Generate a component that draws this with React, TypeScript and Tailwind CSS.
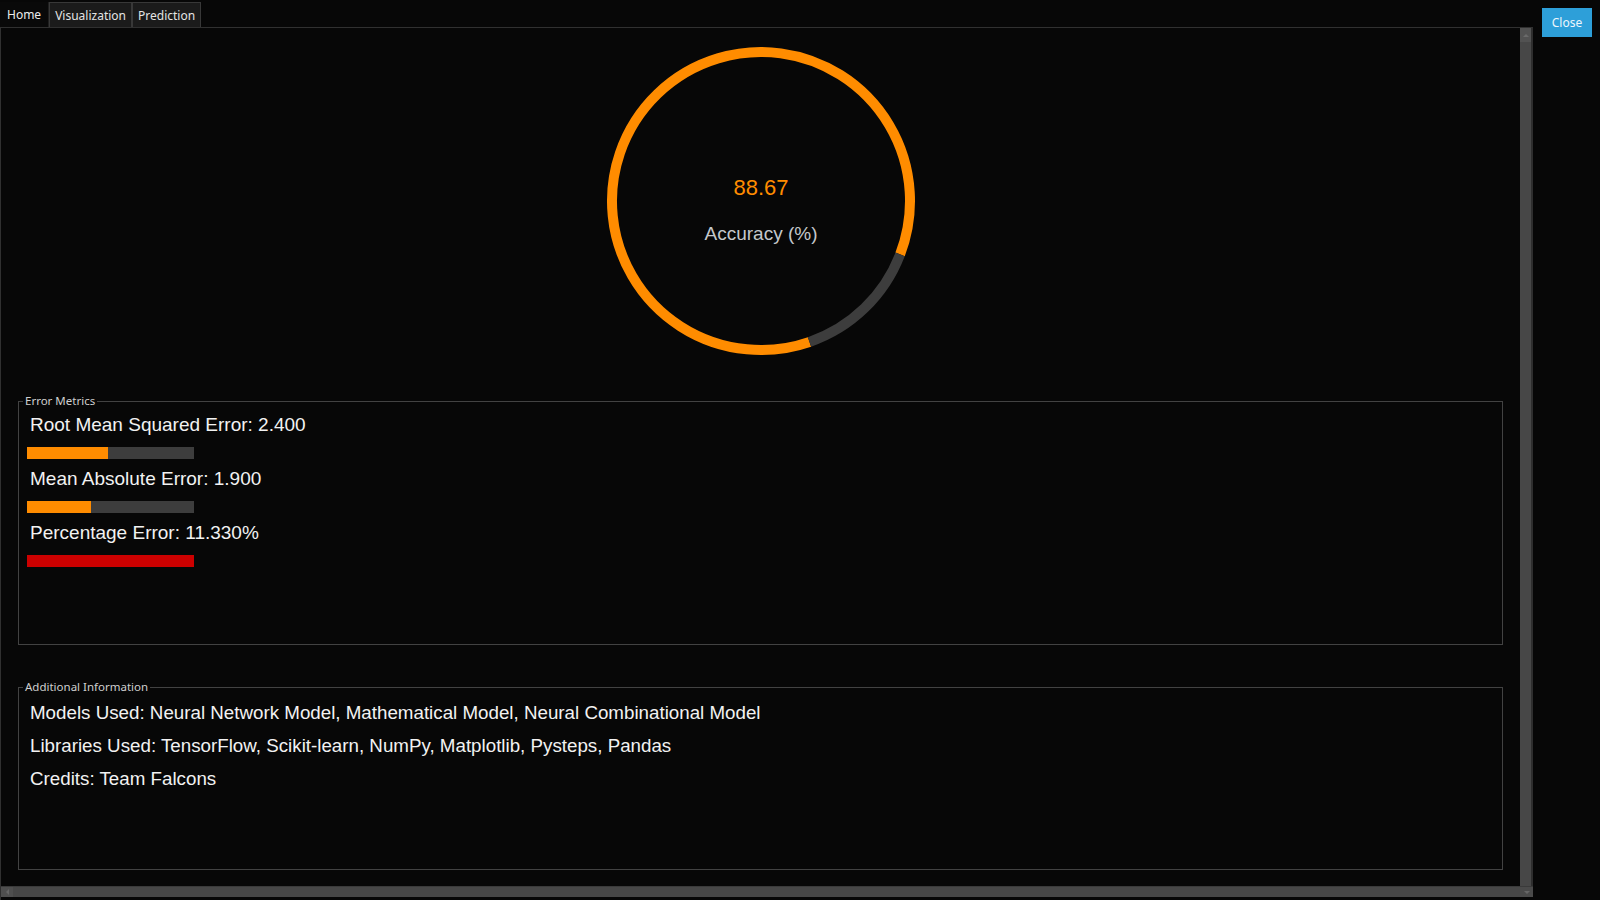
import React from 'react';

const tabs = ['Home', 'Visualization', 'Prediction'];

interface Metric {
  label: string;
  fill: number;
  color: string;
}

const metrics: Metric[] = [
  { label: 'Root Mean Squared Error: 2.400', fill: 81, color: 'bg-[#ff8c00]' },
  { label: 'Mean Absolute Error: 1.900', fill: 64, color: 'bg-[#ff8c00]' },
  { label: 'Percentage Error: 11.330%', fill: 167, color: 'bg-[#cc0000]' },
];

const info = [
  'Models Used: Neural Network Model, Mathematical Model, Neural Combinational Model',
  'Libraries Used: TensorFlow, Scikit-learn, NumPy, Matplotlib, Pysteps, Pandas',
  'Credits: Team Falcons',
];

const uiFont = { fontFamily: '"Noto Sans", "Open Sans", sans-serif' };
const bodyFont = { fontFamily: '"Liberation Sans", Arial, sans-serif' };

// arc end points, r = 149 around (160,160); grey part runs 21deg -> 71deg clockwise
const Gauge = () => (
  <svg width="320" height="320" viewBox="0 0 320 320" className="mt-[13px]">
    <path d="M 208.5 300.9 A 149 149 0 1 1 299.1 213.4" fill="none" stroke="#ff8c00" strokeWidth="10" />
    <path d="M 299.1 213.4 A 149 149 0 0 1 208.5 300.9" fill="none" stroke="#3d3d3d" strokeWidth="10" />
    <text x="160" y="154" textAnchor="middle" fill="#ff8c00" fontSize="22" style={bodyFont}>
      88.67
    </text>
    <text x="160" y="199" textAnchor="middle" fill="#c4c7cb" fontSize="19" style={bodyFont}>
      Accuracy (%)
    </text>
  </svg>
);

const Group: React.FC<{ title: string; className: string; children: React.ReactNode }> = ({
  title,
  className,
  children,
}) => (
  <fieldset className={`mx-[17px] border border-[#424242] px-[4px] ${className}`}>
    <legend className="px-[2px] text-[11.5px] leading-[16px] text-[#cfcfcf]" style={uiFont}>
      {title}
    </legend>
    <div className="px-[4px]" style={bodyFont}>
      {children}
    </div>
  </fieldset>
);

export default function App() {
  return (
    <div className="w-[1600px] h-[900px] bg-[#070707] flex overflow-hidden">
      <div className="w-[1533px] h-full flex flex-col">
        {/* Tab strip */}
        <div className="h-[27px] flex items-end" style={uiFont}>
          {tabs.map((t, i) => (
            <div
              key={t}
              className={
                i === 0
                  ? 'h-[25px] px-[7px] pt-[1px] flex items-center text-[12px] text-[#ececec] bg-[#090909] border-r border-[#1f1f1f]'
                  : 'h-[25px] px-[5px] pt-[1px] flex items-center text-[12px] text-[#e4e4e4] bg-[#1b1b1b] border border-b-0 border-[#383838]'
              }
            >
              {t}
            </div>
          ))}
          <div className="flex-1 h-full" />
        </div>

        {/* Page */}
        <div className="flex-1 flex flex-col border-l border-t border-[#303030]">
          <div className="h-[858px] flex">
            <div className="flex-1 flex flex-col items-center overflow-hidden">
              <Gauge />

              <div className="w-full mt-[32px]">
                <Group title="Error Metrics" className="h-[252px]">
                  <div className="pt-[4px] flex flex-col gap-[8px]">
                    {metrics.map((m) => (
                      <div key={m.label} className="flex flex-col">
                        <div className="pl-[3px] text-[19px] leading-[24px] text-[#f2f2f2]">{m.label}</div>
                        <div className="mt-[10px] w-[167px] h-[12px] bg-[#3d3d3d] flex">
                          <div className={`h-full ${m.color}`} style={{ width: m.fill }} />
                        </div>
                      </div>
                    ))}
                  </div>
                </Group>
              </div>

              <div className="w-full mt-[34px]">
                <Group title="Additional Information" className="h-[191px]">
                  <div className="pt-[1px]">
                    {info.map((line) => (
                      <div
                        key={line}
                        className="pl-[3px] text-[18.75px] leading-[33px] text-[#f2f2f2] whitespace-nowrap"
                      >
                        {line}
                      </div>
                    ))}
                  </div>
                </Group>
              </div>
            </div>

            {/* vertical scrollbar */}
            <div className="w-[13px] flex flex-col bg-[#474747] border-r-2 border-[#2e2e2e]">
              <div className="h-[14px] bg-[#525252] flex items-center justify-center">
                <div className="w-0 h-0 border-l-[3px] border-r-[3px] border-b-[3px] border-l-transparent border-r-transparent border-b-[#6a6a6a]" />
              </div>
            </div>
          </div>

          {/* horizontal scrollbar */}
          <div className="h-[11px] flex bg-[#474747] border-t border-[#3a3a3a]">
            <div className="w-[12px] flex items-center justify-center bg-[#4f4f4f]">
              <div className="w-0 h-0 border-t-[3px] border-b-[3px] border-r-[3px] border-t-transparent border-b-transparent border-r-[#666]" />
            </div>
            <div className="flex-1" />
            <div className="w-[13px] flex items-center justify-center bg-[#4a4a4a]">
              <div className="w-0 h-0 border-l-[3px] border-r-[3px] border-t-[3px] border-l-transparent border-r-transparent border-t-[#666]" />
            </div>
          </div>
          <div className="flex-1" />
        </div>
      </div>

      {/* Close button */}
      <div className="ml-[9px] mt-[8px]">
        <button
          className="w-[50px] h-[29px] bg-[#2d9fd9] text-[12px] text-[#eef7fd] flex items-center justify-center"
          style={uiFont}
        >
          Close
        </button>
      </div>
    </div>
  );
}
